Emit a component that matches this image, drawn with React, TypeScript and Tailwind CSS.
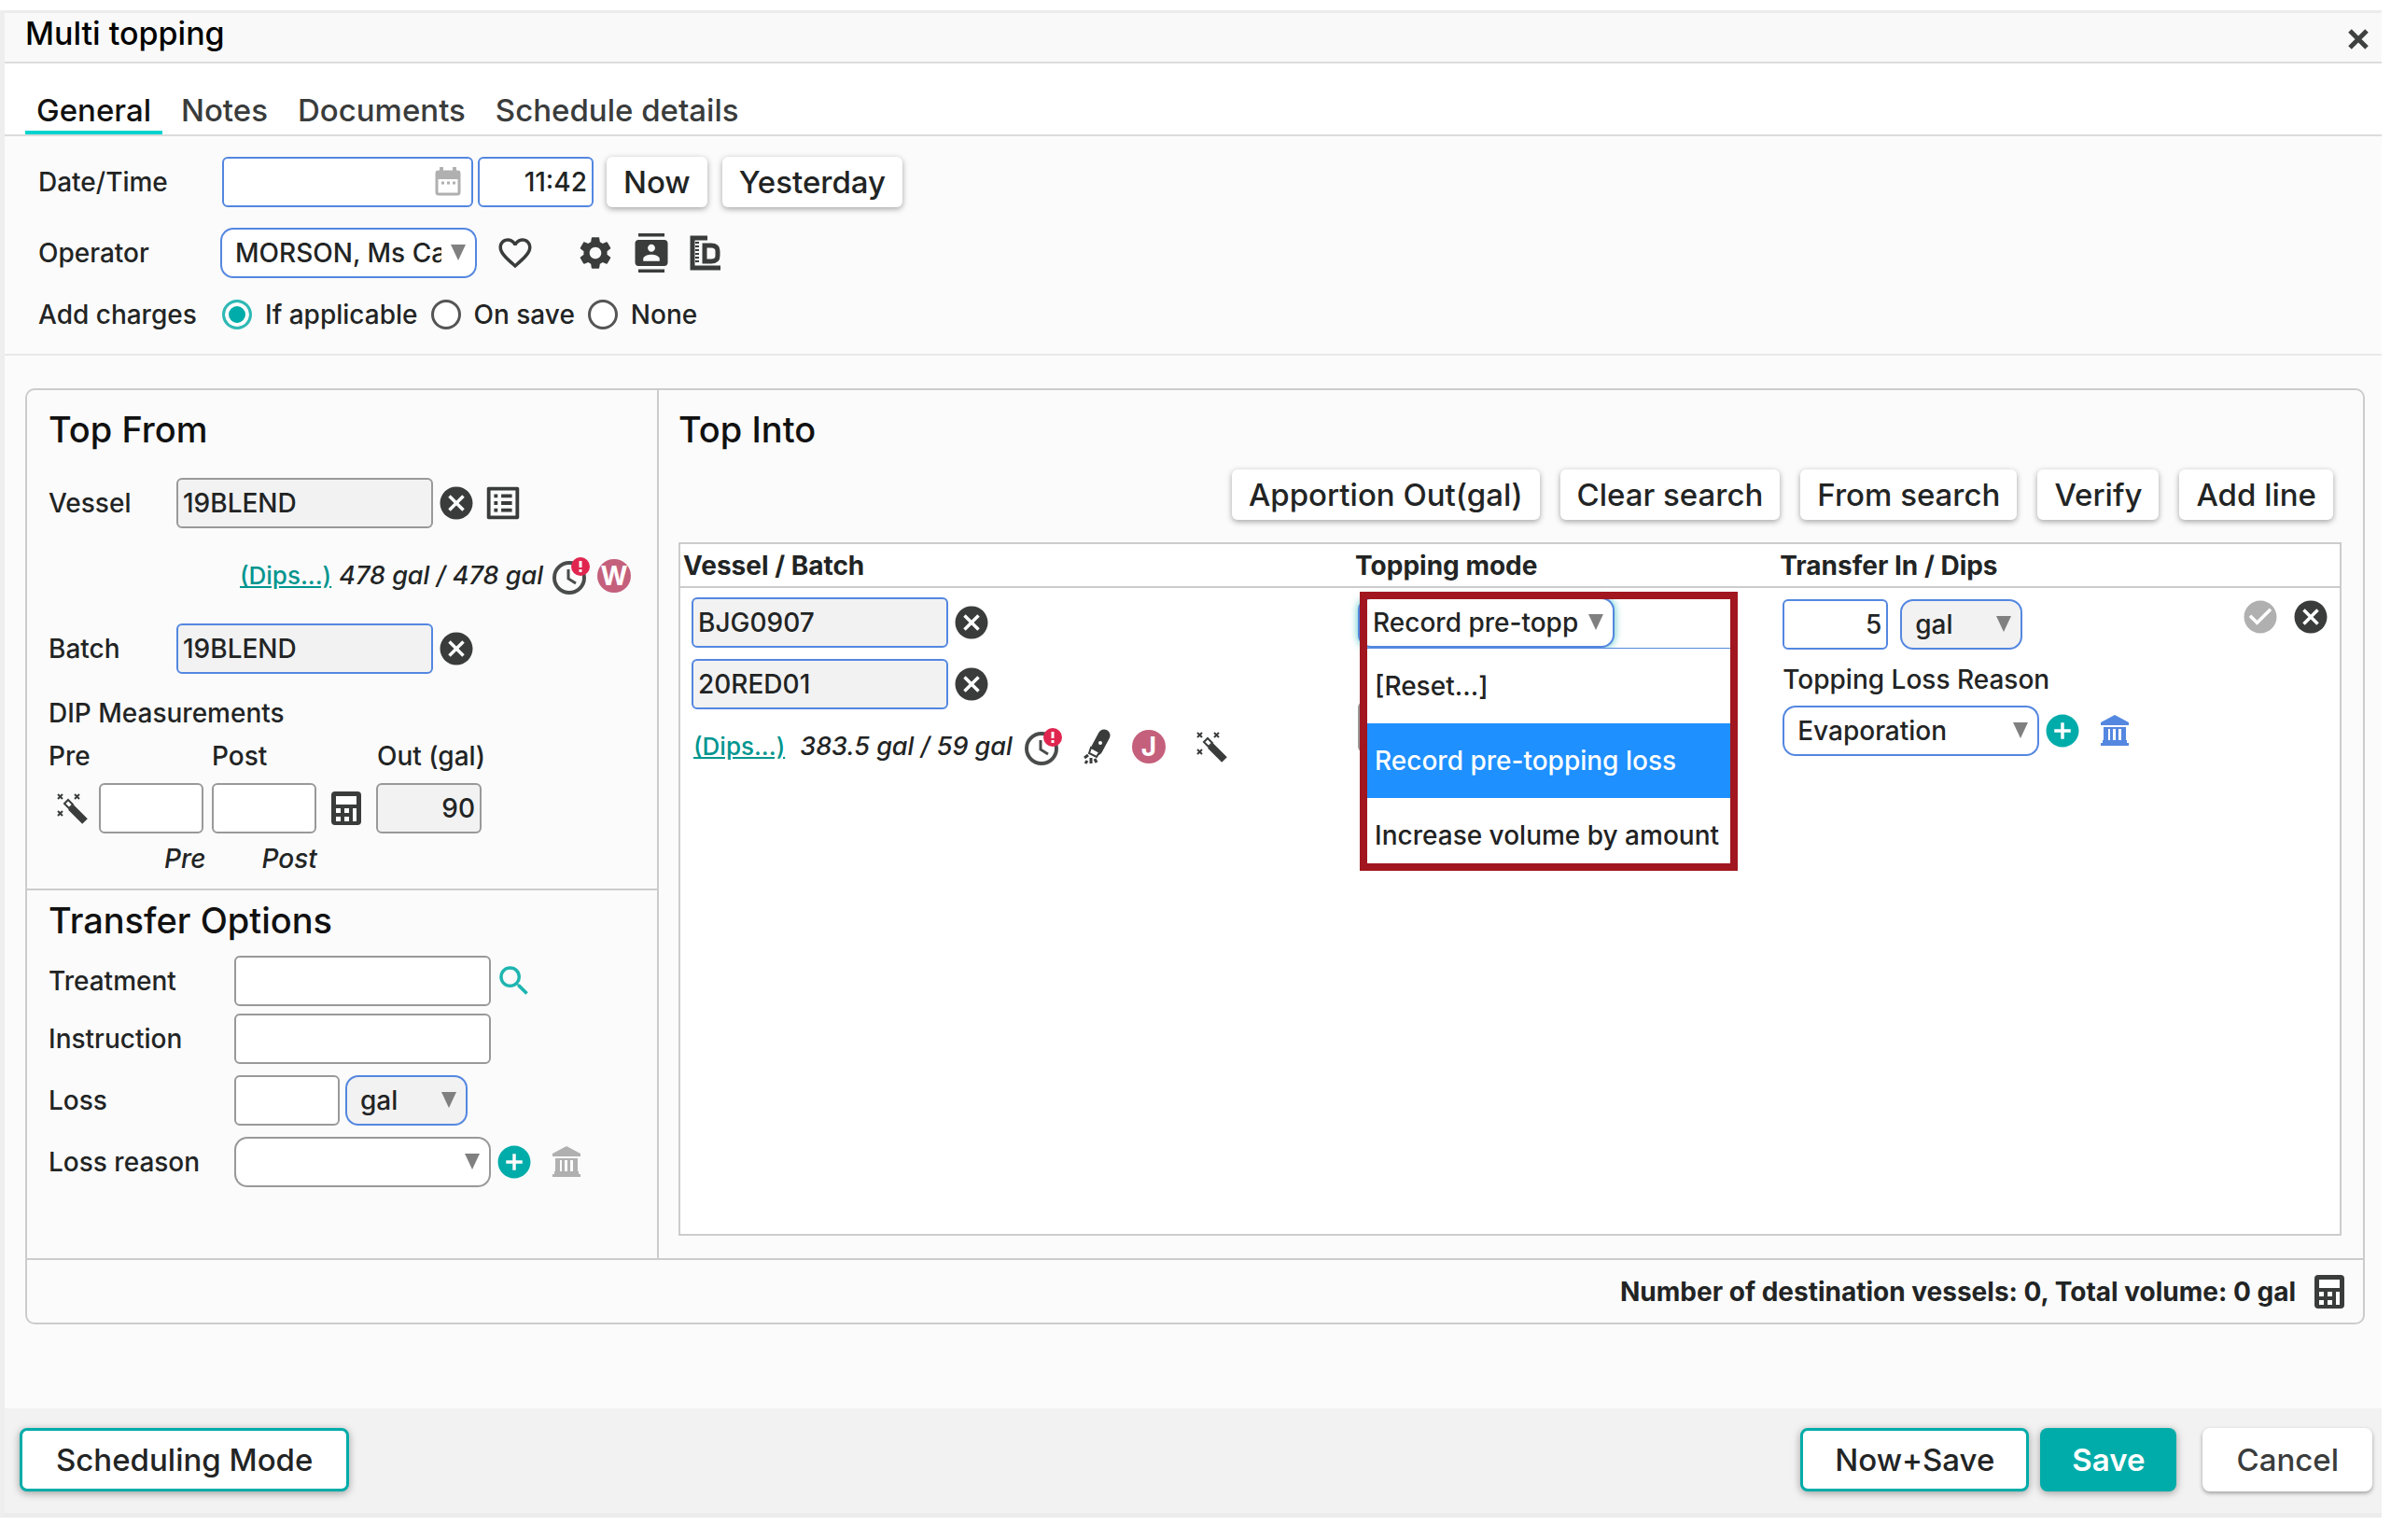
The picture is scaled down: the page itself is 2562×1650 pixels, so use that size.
import { useId, useState } from 'react'
import type { ReactNode } from 'react'
import clsx from 'clsx'
import {
  MdAddCircle,
  MdCancel,
  MdCheckCircle,
  MdContacts,
  MdFavoriteBorder,
  MdListAlt,
  MdSearch,
  MdSettings,
} from 'react-icons/md'

const tabs = ['General', 'Notes', 'Documents', 'Schedule details']
const chargeOptions = ['If applicable', 'On save', 'None']
const toppingModes = ['[Reset...]', 'Record pre-topping loss', 'Increase volume by amount']
const tableActions = ['Apportion Out(gal)', 'Clear search', 'From search', 'Verify', 'Add line']

function CloseIcon() {
  return (
    <svg className="h-6 w-6" viewBox="0 0 24 24" fill="none" stroke="#3f4141">
      <path d="M3 3l18 18M21 3L3 21" strokeWidth="5" />
    </svg>
  )
}

function CalendarIcon() {
  return (
    <svg className="h-[34px] w-[30px]" viewBox="0 0 30 34" fill="none">
      <path d="M8 1v6M22 1v6" stroke="#b0b0b0" strokeWidth="4" />
      <rect x="3" y="6" width="24" height="24" rx="2" fill="#fff" stroke="#b0b0b0" strokeWidth="3" />
      <path d="M2 5h26v9H2z" fill="#b0b0b0" />
      <path d="M8 18h3M14 18h3M20 18h3" stroke="#b0b0b0" strokeWidth="3" />
    </svg>
  )
}

function CalculatorIcon() {
  return (
    <svg className="h-9 w-8" viewBox="0 0 32 36">
      <rect width="32" height="36" rx="4" fill="#3a3c3c" />
      <path d="M5 5h22v9H5z" fill="#fff" />
      <path d="M5 18h5v5H5zM14 18h5v5h-5zM5 27h5v5H5zM14 27h5v5h-5zM23 18h4v14h-4z" fill="#fff" />
    </svg>
  )
}

function BankIcon() {
  return (
    <svg className="h-9 w-8" viewBox="0 0 32 36" fill="currentColor">
      <path d="M16 1l15 8v3H1V9z" />
      <path d="M4 14h24v2H4z" />
      <path d="M4 16h5v12H4zM11 16h3v12h-3zM17 16h3v12h-3zM23 16h5v12h-5z" />
      <path d="M3 28h26v3H3zM1 31h30v3H1z" />
    </svg>
  )
}

function WandIcon() {
  return (
    <svg className="h-9 w-9" viewBox="0 0 36 36" fill="none" stroke="#3a3c3c">
      <path d="M16 17l15 15" strokeWidth="8" />
      <path d="M9 13l4-4 5 5-4 4z" fill="#fff" strokeWidth="2" />
      <path d="M2 3l5 5M7 3L2 8M20 3l5 5M25 3l-5 5M2 21l5 5M7 21l-5 5" strokeWidth="2" />
    </svg>
  )
}

function ClockAlertIcon() {
  return (
    <svg className="h-[42px] w-[42px]" viewBox="0 0 42 42" fill="none">
      <circle cx="19" cy="23" r="16" stroke="#4a4c4c" strokeWidth="4" />
      <path d="M18 14v10l8 5" stroke="#4a4c4c" strokeWidth="3" />
      <circle cx="31" cy="11" r="10" fill="#e0264f" />
      <path d="M31 5v7M31 14v3" stroke="#fff" strokeWidth="3" />
    </svg>
  )
}

function TubeIcon() {
  return (
    <svg className="h-10 w-[30px]" viewBox="0 0 30 40" fill="none">
      <path d="M22 8L14 23" stroke="#3a3c3c" strokeWidth="13" strokeLinecap="round" />
      <path d="M8 21l9 5-3 5-8-4z" fill="#fff" stroke="#3a3c3c" strokeWidth="2" />
      <circle cx="18" cy="16" r="2" fill="#fff" />
      <path d="M5 29l-4 3M4 35l-2 3M8 32v6M12 33l2 4" stroke="#3a3c3c" strokeWidth="3" />
    </svg>
  )
}

function DocumentDIcon() {
  return (
    <svg className="h-10 w-9" viewBox="0 0 36 40" fill="none" stroke="#3a3c3c">
      <path d="M20 4H4v32h30" strokeWidth="5" />
      <path d="M9 8v24" strokeWidth="4" strokeDasharray="2 2" />
      <path d="M17 12h7q7 0 7 6v5q0 6-7 6h-7z" strokeWidth="5" />
    </svg>
  )
}

function IconButton({ label, className, children }: { label: string; className?: string; children: ReactNode }) {
  return (
    <button type="button" aria-label={label} className={clsx('flex shrink-0 items-center justify-center', className)}>
      {children}
    </button>
  )
}

function ClearButton({ label }: { label: string }) {
  return (
    <IconButton label={label} className="w-10 text-[#3a3c3c]">
      <MdCancel size={42} className="shrink-0" />
    </IconButton>
  )
}

function RaisedButton({ children }: { children: ReactNode }) {
  return (
    <button
      type="button"
      className="h-[54px] rounded-md bg-white px-[18px] text-[33px] leading-10 whitespace-nowrap shadow-[0_2px_6px_rgba(0,0,0,0.35)]"
    >
      {children}
    </button>
  )
}

function TextInput({ label, id, value = '', className }: { label?: string; id?: string; value?: string; className?: string }) {
  return (
    <input
      id={id}
      type="text"
      aria-label={label}
      defaultValue={value}
      className={clsx('h-[54px] shrink-0 rounded-md border-2 px-[5px] outline-none', className)}
    />
  )
}

function Select({ label, id, value, className }: { label?: string; id?: string; value: string; className?: string }) {
  return (
    <div className="relative w-fit shrink-0">
      <select
        id={id}
        aria-label={label}
        defaultValue={value}
        className={clsx('block h-[54px] appearance-none rounded-[14px] border-2 pr-9 pl-[14px] outline-none', className)}
      >
        <option>{value}</option>
      </select>
      <svg className="pointer-events-none absolute top-[18px] right-3 h-[17px] w-4" viewBox="0 0 16 17">
        <path d="M0 0h16L8 17z" fill="#808080" />
      </svg>
    </div>
  )
}

function Badge({ children }: { children: ReactNode }) {
  return (
    <span className="flex h-9 w-9 shrink-0 items-center justify-center rounded-full bg-[#c4607c] text-[28px] font-bold text-white">
      {children}
    </span>
  )
}

function Header() {
  return (
    <header className="flex h-[57px] items-center justify-between border-t-[3px] border-b-2 border-t-[#ececec] border-b-[#dcdcdc] bg-[#f9f9f9] pr-[13px] pl-[22px]">
      <h1 className="pb-2 text-[34px] leading-10 text-black">Multi topping</h1>
      <IconButton label="Close" className="pt-1">
        <CloseIcon />
      </IconButton>
    </header>
  )
}

function TabBar() {
  const [active, setActive] = useState('General')

  return (
    <nav className="flex h-[78px] items-end gap-2 border-b-2 border-[#dcdcdc] bg-white pl-[22px]">
      {tabs.map((tab) => (
        <button
          key={tab}
          type="button"
          onClick={() => setActive(tab)}
          className={clsx(
            'h-12 border-b-4 px-3 text-[33px] leading-10',
            tab === active ? 'border-[#00d3ce] text-[#111]' : 'border-transparent text-[#3a3c3c]',
          )}
        >
          {tab}
        </button>
      ))}
    </nav>
  )
}

function GeneralFields() {
  const id = useId()

  return (
    <section className="flex flex-col gap-[22px] border-b-2 border-[#e8e8e8] pt-[22px] pb-[25px] pl-9">
      <div className="flex items-center">
        <label htmlFor={`${id}-date`} className="w-[197px]">
          Date/Time
        </label>
        <div className="relative">
          <TextInput id={`${id}-date`} className="w-[269px] border-[#5487e0] bg-white" />
          <span className="pointer-events-none absolute top-[10px] right-3">
            <CalendarIcon />
          </span>
        </div>
        <TextInput label="Time" value="11:42" className="mr-[14px] ml-[5px] w-[124px] border-[#5487e0] bg-white text-right" />
        <div className="flex gap-4">
          <RaisedButton>Now</RaisedButton>
          <RaisedButton>Yesterday</RaisedButton>
        </div>
      </div>

      <div className="flex items-center">
        <label htmlFor={`${id}-operator`} className="w-[195px]">
          Operator
        </label>
        <Select id={`${id}-operator`} value="MORSON, Ms Carol" className="w-[275px] border-[#5487e0] bg-white" />
        <div className="ml-5 flex items-center text-[#3a3c3c]">
          <IconButton label="Favourite" className="mr-[45px] w-[42px]">
            <MdFavoriteBorder size={42} />
          </IconButton>
          <div className="flex items-center gap-5">
            <IconButton label="Settings" className="w-10">
              <MdSettings size={42} className="shrink-0" />
            </IconButton>
            <IconButton label="Contacts" className="w-10">
              <MdContacts size={42} className="shrink-0" />
            </IconButton>
            <IconButton label="Docket">
              <DocumentDIcon />
            </IconButton>
          </div>
        </div>
      </div>

      <fieldset className="flex h-[34px] items-center">
        <legend className="float-left w-[197px]">Add charges</legend>
        <div className="flex gap-[14px]">
          {chargeOptions.map((option) => (
            <label key={option} className="flex items-center gap-[14px]">
              <input
                type="radio"
                name={`${id}-charges`}
                defaultChecked={option === 'If applicable'}
                className="h-8 w-8 appearance-none rounded-full border-[3px] border-[#555] bg-white checked:border-[#2fb9b5] checked:bg-[#00aca9] checked:shadow-[inset_0_0_0_4px_#fff]"
              />
              {option}
            </label>
          ))}
        </div>
      </fieldset>
    </section>
  )
}

function TopFrom() {
  const id = useId()

  return (
    <section className="border-b-2 border-[#ccc] pt-5 pb-[15px] pl-[23px]">
      <h2 className="text-[38px] leading-[44px] text-[#111]">Top From</h2>

      <div className="mt-[30px] flex items-center">
        <label htmlFor={`${id}-vessel`} className="w-[137px]">
          Vessel
        </label>
        <TextInput id={`${id}-vessel`} value="19BLEND" className="mr-[5px] w-[275px] border-[#999] bg-[#f2f2f2]" />
        <ClearButton label="Clear vessel" />
        <IconButton label="Vessel list" className="ml-[10px] w-10 text-[#3a3c3c]">
          <MdListAlt size={46} className="shrink-0" />
        </IconButton>
      </div>

      <div className="mt-[31px] flex h-10 items-center justify-end pr-[28px]">
        <a href="#dips" className="mr-2 text-[26px] text-[#00958f] underline">
          (Dips...)
        </a>
        <span className="mr-[9px] text-[27px] italic">478 gal / 478 gal</span>
        <ClockAlertIcon />
        <span className="ml-[7px]">
          <Badge>W</Badge>
        </span>
      </div>

      <div className="mt-[31px] flex items-center">
        <label htmlFor={`${id}-batch`} className="w-[137px]">
          Batch
        </label>
        <TextInput id={`${id}-batch`} value="19BLEND" className="mr-[5px] w-[275px] border-[#5487e0] bg-[#f2f2f2]" />
        <ClearButton label="Clear batch" />
      </div>

      <h3 className="mt-[25px]">DIP Measurements</h3>
      <div className="mt-3 flex">
        <label htmlFor={`${id}-pre`} className="w-[175px]">
          Pre
        </label>
        <label htmlFor={`${id}-post`} className="w-[177px]">
          Post
        </label>
        <label htmlFor={`${id}-out`}>Out (gal)</label>
      </div>
      <div className="mt-3 flex items-center pl-2">
        <IconButton label="Fill dips" className="mr-[10px]">
          <WandIcon />
        </IconButton>
        <TextInput id={`${id}-pre`} className="mr-[9px] w-[112px] border-[#999] bg-white" />
        <TextInput id={`${id}-post`} className="mr-4 w-[112px] border-[#999] bg-white" />
        <IconButton label="Calculate" className="mr-4">
          <CalculatorIcon />
        </IconButton>
        <TextInput id={`${id}-out`} value="90" className="w-[113px] border-[#999] bg-[#f2f2f2] text-right" />
      </div>
      <div className="mt-[10px] flex gap-[60px] pl-[124px] italic">
        <span>Pre</span>
        <span>Post</span>
      </div>
    </section>
  )
}

function TransferOptions() {
  const id = useId()

  return (
    <section className="pt-[10px] pb-[76px] pl-[23px]">
      <h2 className="text-[38px] leading-[44px] text-[#111]">Transfer Options</h2>
      <div className="mt-4 flex items-center">
        <label htmlFor={`${id}-treatment`} className="w-[199px]">
          Treatment
        </label>
        <TextInput id={`${id}-treatment`} className="w-[275px] border-[#999] bg-white" />
        <IconButton label="Find treatment" className="ml-1 text-[#1fb5b1]">
          <MdSearch size={42} />
        </IconButton>
      </div>
      <div className="mt-2 flex items-center">
        <label htmlFor={`${id}-instruction`} className="w-[199px]">
          Instruction
        </label>
        <TextInput id={`${id}-instruction`} className="w-[275px] border-[#999] bg-white" />
      </div>
      <div className="mt-3 flex items-center">
        <label htmlFor={`${id}-loss`} className="w-[199px]">
          Loss
        </label>
        <TextInput id={`${id}-loss`} className="mr-[6px] w-[113px] border-[#999] bg-white" />
        <Select label="Loss unit" value="gal" className="w-[131px] border-[#5487e0] bg-[#f2f2f2]" />
      </div>
      <div className="mt-3 flex items-center">
        <label htmlFor={`${id}-reason`} className="w-[199px]">
          Loss reason
        </label>
        <Select id={`${id}-reason`} value="" className="w-[275px] border-[#999] bg-white" />
        <IconButton label="Add loss reason" className="ml-[5px] w-10 text-[#00aca9]">
          <MdAddCircle size={42} className="shrink-0" />
        </IconButton>
        <IconButton label="Loss account" className="ml-4 w-10 text-[#b0b0b0]">
          <BankIcon />
        </IconButton>
      </div>
    </section>
  )
}

function ToppingModePicker() {
  const selected = 'Record pre-topping loss'

  return (
    <div className="relative">
      <Select
        label="Topping mode"
        value={selected}
        className="w-[275px] border-[#5487e0] bg-white shadow-[0_0_8px_rgba(0,172,169,0.7)]"
      />
      <ul
        role="listbox"
        aria-label="Topping mode options"
        className="absolute top-[54px] left-[10px] z-10 h-[230px] w-[389px] overflow-hidden border-t border-[#5487e0] bg-white"
      >
        {toppingModes.map((mode) => (
          <li
            key={mode}
            role="option"
            aria-selected={mode === selected}
            className={clsx(
              'flex h-20 items-center pl-2 whitespace-nowrap',
              mode === selected ? 'bg-[#1e90ff] text-white' : 'text-[#222]',
            )}
          >
            {mode}
          </li>
        ))}
      </ul>
      <div className="pointer-events-none absolute -top-[6px] left-[2px] z-20 h-[299px] w-[405px] border-8 border-[#a1161f]" />
      <TextInput label="Volume" className="mt-[58px] w-[113px] border-[#999] bg-[#f2f2f2]" />
    </div>
  )
}

function ToppingTable() {
  const id = useId()

  return (
    <div className="mt-6 mb-6 grow border-2 border-[#ccc] bg-white">
      <table className="w-full table-fixed text-left">
        <thead>
          <tr className="h-[46px] border-b-2 border-[#ccc]">
            <th className="w-[40.5%] pl-[3px] font-bold">Vessel / Batch</th>
            <th className="w-[25.6%] pl-[3px] font-bold">Topping mode</th>
            <th className="pl-[3px] font-bold">Transfer In / Dips</th>
            <th className="w-[10%]" />
          </tr>
        </thead>
        <tbody>
          <tr className="align-top">
            <td className="pt-[10px] pl-3">
              <div className="flex items-center">
                <TextInput label="Vessel" value="BJG0907" className="mr-[5px] w-[275px] border-[#5487e0] bg-[#f2f2f2]" />
                <ClearButton label="Clear vessel" />
              </div>
              <div className="mt-3 flex items-center">
                <TextInput label="Batch" value="20RED01" className="mr-[5px] w-[275px] border-[#5487e0] bg-[#f2f2f2]" />
                <ClearButton label="Clear batch" />
              </div>
              <div className="mt-5 flex h-10 items-center pl-[2px]">
                <a href="#dips" className="mr-4 text-[26px] text-[#00958f] underline">
                  (Dips...)
                </a>
                <span className="mr-3 text-[27px] italic">383.5 gal / 59 gal</span>
                <ClockAlertIcon />
                <span className="mr-[22px] ml-[22px]">
                  <TubeIcon />
                </span>
                <Badge>J</Badge>
                <IconButton label="Fill dips" className="ml-8">
                  <WandIcon />
                </IconButton>
              </div>
            </td>
            <td className="pt-[10px] pl-[6px]">
              <ToppingModePicker />
            </td>
            <td className="pt-3 pl-[6px]">
              <div className="flex gap-[13px]">
                <TextInput label="Transfer in" value="5" className="w-[113px] border-[#5487e0] bg-white text-right" />
                <Select label="Transfer unit" value="gal" className="w-[131px] border-[#5487e0] bg-[#f2f2f2]" />
              </div>
              <label htmlFor={`${id}-reason`} className="mt-[15px] mb-[11px] block">
                Topping Loss Reason
              </label>
              <div className="flex items-center">
                <Select id={`${id}-reason`} value="Evaporation" className="w-[275px] border-[#5487e0] bg-white" />
                <IconButton label="Add topping loss reason" className="ml-[5px] w-10 text-[#00aca9]">
                  <MdAddCircle size={42} className="shrink-0" />
                </IconButton>
                <IconButton label="Topping loss account" className="ml-4 w-10 text-[#5487e0]">
                  <BankIcon />
                </IconButton>
              </div>
            </td>
            <td className="pt-[10px] pr-[11px]">
              <div className="flex justify-end gap-[14px]">
                <IconButton label="Confirm line" className="w-10 text-[#b0b0b0]">
                  <MdCheckCircle size={42} className="shrink-0" />
                </IconButton>
                <ClearButton label="Remove line" />
              </div>
            </td>
          </tr>
        </tbody>
      </table>
    </div>
  )
}

function TopInto() {
  return (
    <section className="flex grow flex-col pt-5 pr-[23px] pl-[21px]">
      <h2 className="text-[38px] leading-[44px] text-[#111]">Top Into</h2>
      <div className="mt-[21px] flex justify-end gap-[22px] pr-[9px]">
        {tableActions.map((action) => (
          <RaisedButton key={action}>{action}</RaisedButton>
        ))}
      </div>
      <ToppingTable />
    </section>
  )
}

function FooterBar() {
  return (
    <footer className="flex items-center justify-between border-b-[5px] border-[#ececec] bg-[#f2f2f2] pt-[21px] pr-[10px] pb-[23px] pl-4 text-[33px] leading-10">
      <button type="button" className="h-[68px] rounded-lg border-[3px] border-[#00aca9] bg-white px-9 shadow-[0_2px_8px_rgba(0,0,0,0.35)]">
        Scheduling Mode
      </button>
      <div className="flex">
        <button type="button" className="mr-3 h-[68px] rounded-lg border-[3px] border-[#00aca9] bg-white px-[34px] shadow-[0_2px_8px_rgba(0,0,0,0.35)]">
          Now+Save
        </button>
        <button type="button" className="mr-7 h-[68px] rounded-lg bg-[#00aca9] px-[34px] font-semibold text-white shadow-[0_2px_8px_rgba(0,0,0,0.35)]">
          Save
        </button>
        <button type="button" className="h-[68px] rounded-lg bg-white px-9 text-[#3a3c3c] shadow-[0_2px_4px_rgba(0,0,0,0.35)]">
          Cancel
        </button>
      </div>
    </footer>
  )
}

export default function App() {
  return (
    <div className="min-h-screen bg-white pt-[11px] pr-[10px] font-['Inter',sans-serif] text-[28px] leading-[34px] font-medium text-[#222424]">
      <div className="border-l-[5px] border-[#eee] bg-[#fbfbfb]">
        <Header />
        <TabBar />
        <main>
          <GeneralFields />
          <div className="pt-[35px] pr-[18px] pb-[90px] pl-[22px]">
            <div className="rounded-[10px] border-2 border-[#ccc]">
              <div className="flex border-b-2 border-[#ccc]">
                <div className="w-[677px] shrink-0 border-r-2 border-[#ccc]">
                  <TopFrom />
                  <TransferOptions />
                </div>
                <TopInto />
              </div>
              <div className="flex h-[67px] items-center justify-end gap-5 pr-5 font-bold">
                Number of destination vessels: 0, Total volume: 0 gal
                <IconButton label="Recalculate totals">
                  <CalculatorIcon />
                </IconButton>
              </div>
            </div>
          </div>
        </main>
        <FooterBar />
      </div>
    </div>
  )
}
